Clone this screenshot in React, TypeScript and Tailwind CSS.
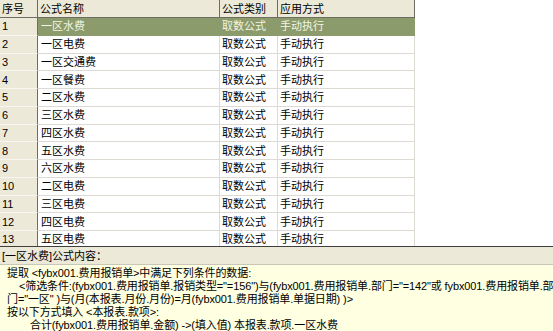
import React from 'react';

const rows: [string, string][] = [
  ['1', '一区水费'],
  ['2', '一区电费'],
  ['3', '一区交通费'],
  ['4', '一区餐费'],
  ['5', '二区水费'],
  ['6', '三区水费'],
  ['7', '四区水费'],
  ['8', '五区水费'],
  ['9', '六区水费'],
  ['10', '二区电费'],
  ['11', '三区电费'],
  ['12', '四区电费'],
  ['13', '五区电费'],
  ['14', '六区电费'],
];

const headers = ['序号', '公式名称', '公式类别', '应用方式'];

export default function App() {
  return (
    <div
      className="w-[553px] h-[331px] flex flex-col overflow-hidden bg-white text-black text-[11px] leading-[14px]"
      style={{ fontFamily: '"Liberation Sans", "Noto Sans CJK SC", sans-serif' }}
    >
      {/* grid */}
      <div className="h-[247px] shrink-0 overflow-hidden bg-white border-b border-[#3f3f3f]">
        <div className="grid grid-cols-[38px_182px_58px_137px] w-[415px]">
          {headers.map((h) => (
            <div
              key={h}
              className="h-[18px] flex items-center px-[2px] bg-[#ece9d8] border-r border-b border-[#6f6d63]"
            >
              {h}
            </div>
          ))}
          {rows.map(([n, name], i) => {
            const sel = i === 0;
            const cell = sel
              ? 'bg-[#8c9b6b] text-[#f1f5e4] border-[#8c9b6b]'
              : 'bg-white border-[#dcdad2]';
            return (
              <React.Fragment key={n}>
                <div className="h-[17.75px] flex items-center px-[2px] bg-[#ece9d8] border-r border-r-[#6f6d63] border-b border-b-[#f7f6f1]">
                  {n}
                </div>
                <div className={`h-[17.75px] flex items-center px-[3px] border-r border-b ${cell}`}>{name}</div>
                <div className={`h-[17.75px] flex items-center px-[2px] border-r border-b ${cell}`}>取数公式</div>
                <div className={`h-[17.75px] flex items-center px-[2px] border-r border-b ${cell}`}>手动执行</div>
              </React.Fragment>
            );
          })}
        </div>
      </div>

      {/* caption bar */}
      <div className="h-[17px] shrink-0 flex items-center px-[2px] bg-[#ece9d8] whitespace-nowrap">
        [一区水费]公式内容：
      </div>

      {/* formula content */}
      <div className="flex-1 bg-[#ffffe1] border-t border-[#c9c7ba] pl-[7px] pt-[2px] leading-[13px] tracking-[-0.12px] whitespace-nowrap overflow-hidden">
        <div>提取 &lt;fybx001.费用报销单&gt;中满足下列条件的数据:</div>
        <div className="pl-[12px]">
          &lt;筛选条件:(fybx001.费用报销单.报销类型="=156")与(fybx001.费用报销单.部门="=142"或 fybx001.费用报销单.部
        </div>
        <div>门="一区" )与(月(本报表.月份.月份)=月(fybx001.费用报销单.单据日期) )&gt;</div>
        <div>按以下方式填入 &lt;本报表.款项&gt;:</div>
        <div className="pl-[23px]">合计(fybx001.费用报销单.金额) -&gt;(填入值) 本报表.款项.一区水费</div>
      </div>
    </div>
  );
}
